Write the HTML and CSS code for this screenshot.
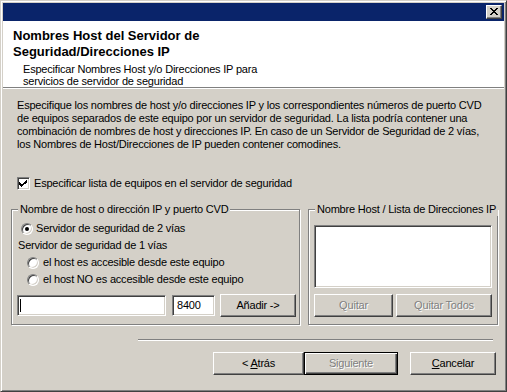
FILE: index.html
```html
<!DOCTYPE html>
<html lang="es">
<head>
<meta charset="utf-8">
<title>Nombres Host del Servidor de Seguridad</title>
<link rel="stylesheet" href="styles.css">
</head>
<body>
<div class="window">
  <div class="titlebar">
    <div class="close-btn">
      <svg width="8" height="7" viewBox="0 0 8 7" shape-rendering="crispEdges">
        <rect x="0" y="0" width="2" height="1" fill="#000"/><rect x="6" y="0" width="2" height="1" fill="#000"/>
        <rect x="1" y="1" width="2" height="1" fill="#000"/><rect x="5" y="1" width="2" height="1" fill="#000"/>
        <rect x="2" y="2" width="4" height="1" fill="#000"/>
        <rect x="3" y="3" width="2" height="1" fill="#000"/>
        <rect x="2" y="4" width="4" height="1" fill="#000"/>
        <rect x="1" y="5" width="2" height="1" fill="#000"/><rect x="5" y="5" width="2" height="1" fill="#000"/>
        <rect x="0" y="6" width="2" height="1" fill="#000"/><rect x="6" y="6" width="2" height="1" fill="#000"/>
      </svg>
    </div>
  </div>
  <div class="header">
    <div class="h-title">Nombres Host del Servidor de<br>Seguridad/Direcciones IP</div>
    <div class="h-sub">Especificar Nombres Host y/o Direcciones IP para<br>servicios de servidor de seguridad</div>
  </div>
  <div class="content">
    <p class="intro">Especifique los nombres de host y/o direcciones IP y los correspondientes números de puerto CVD<br>de equipos separados de este equipo por un servidor de seguridad. La lista podría contener una<br>combinación de nombres de host y direcciones IP. En caso de un Servidor de Seguridad de 2 vías,<br>los Nombres de Host/Direcciones de IP pueden contener comodines.</p>
    <div class="check-row">
      <span class="checkbox">
        <svg width="13" height="13" viewBox="0 0 13 13" shape-rendering="crispEdges">
          <rect x="9" y="3" width="1" height="1" fill="#000"/>
          <rect x="8" y="4" width="2" height="1" fill="#000"/>
          <rect x="2" y="5" width="1" height="1" fill="#000"/><rect x="7" y="5" width="3" height="1" fill="#000"/>
          <rect x="2" y="6" width="2" height="1" fill="#000"/><rect x="6" y="6" width="3" height="1" fill="#000"/>
          <rect x="2" y="7" width="5" height="1" fill="#000"/>
          <rect x="3" y="8" width="3" height="1" fill="#000"/>
          <rect x="4" y="9" width="1" height="1" fill="#000"/>
        </svg>
      </span>
      <span>Especificar lista de equipos en el servidor de seguridad</span>
    </div>
    <div class="groups">
      <fieldset class="group group-host">
        <legend>Nombre de host o dirección IP y puerto CVD</legend>
        <div class="g-body">
          <div class="opt opt-top"><span class="radio"><span class="dot"></span></span><span>Servidor de seguridad de 2 vías</span></div>
          <div class="opt opt-label"><span>Servidor de seguridad de 1 vías</span></div>
          <div class="opt opt-sub"><span class="radio"></span><span>el host es accesible desde este equipo</span></div>
          <div class="opt opt-sub"><span class="radio"></span><span>el host NO es accesible desde este equipo</span></div>
          <div class="input-row">
            <div class="edit edit-host"><span class="caret"></span></div>
            <div class="edit edit-port">8400</div>
            <div class="btn btn-add"><span>Añadir -&gt;</span></div>
          </div>
        </div>
      </fieldset>
      <fieldset class="group group-list">
        <legend>Nombre Host / Lista de Direcciones IP</legend>
        <div class="g-body g-body-list">
          <div class="listbox"></div>
          <div class="list-buttons">
            <div class="btn btn-quitar disabled"><span>Quitar</span></div>
            <div class="btn btn-quitar-todos disabled"><span>Quitar Todos</span></div>
          </div>
        </div>
      </fieldset>
    </div>
    <div class="sep"></div>
    <div class="footer">
      <div class="btn btn-back"><span>&lt; <u>A</u>trás</span></div>
      <div class="btn btn-next btn-default disabled"><span>Siguiente</span></div>
      <div class="btn btn-cancel"><span><u>C</u>ancelar</span></div>
    </div>
  </div>
</div>
</body>
</html>
```
FILE: styles.css
```css
* { box-sizing: border-box; }
html, body { margin: 0; padding: 0; }
body {
  width: 507px;
  height: 392px;
  overflow: hidden;
  background: #d4d0c8;
  font-family: "Liberation Sans", Arial, sans-serif;
  font-size: 11px;
  letter-spacing: -0.2px;
  color: #000;
}
.window {
  width: 507px;
  height: 392px;
  background: #d4d0c8;
  border: 1px solid;
  border-color: #d4d0c8 #404040 #404040 #d4d0c8;
  box-shadow: inset 1px 1px #fff, inset -1px -1px #808080;
  padding: 2px;
  display: flex;
  flex-direction: column;
}
.titlebar {
  height: 18px;
  flex: none;
  background: #0a246a;
  display: flex;
  justify-content: flex-end;
  align-items: flex-start;
  padding: 2px 2px 0 0;
}
.close-btn {
  width: 16px;
  height: 14px;
  background: #d4d0c8;
  border: 1px solid;
  border-color: #fff #404040 #404040 #fff;
  box-shadow: inset -1px -1px #808080;
  padding: 2px 0 0 3px;
  display: flex;
  align-items: flex-start;
}
.close-btn svg { display: block; }
.header {
  height: 67px;
  flex: none;
  background: #fff;
  border-bottom: 1px solid #808080;
  padding: 7px 0 0 10px;
}
.h-title {
  font-weight: bold;
  font-size: 13px;
  line-height: 16px;
  letter-spacing: 0;
}
.h-sub {
  margin: 3px 0 0 10px;
  line-height: 12px;
}
.content {
  flex: 1;
  border-top: 1px solid #fff;
  padding-top: 10px;
}
.intro {
  margin: 0 0 0 14px;
  line-height: 13px;
  white-space: nowrap;
}
.check-row {
  display: flex;
  align-items: center;
  gap: 4px;
  height: 13px;
  margin: 26px 0 0 14px;
  line-height: 13px;
}
.checkbox {
  width: 13px;
  height: 13px;
  background: #fff;
  border: 1px solid;
  border-color: #808080 #fff #fff #808080;
  box-shadow: inset 1px 1px #404040, inset -1px -1px #d4d0c8;
  position: relative;
}
.checkbox svg {
  position: absolute;
  left: -1px;
  top: -1px;
}
.groups {
  display: flex;
  gap: 8px;
  height: 122px;
  margin: 13px 0 0 8px;
}
.group {
  margin: 0;
  padding: 0;
  min-width: 0;
  border: 1px solid #808080;
  box-shadow: inset 1px 1px #fff, 1px 1px #fff;
}
.group legend {
  margin-left: 6px;
  padding: 0 2px;
  line-height: 13px;
  background: #d4d0c8;
  white-space: nowrap;
}
.group-host { width: 289px; }
.group-list { width: 190px; }
.g-body {
  display: flex;
  flex-direction: column;
  padding: 4px 0 0 5px;
}
.opt {
  height: 17px;
  display: flex;
  align-items: center;
  line-height: 13px;
  white-space: nowrap;
}
.opt-top { padding-left: 4px; gap: 3px; }
.opt-label { padding-left: 1px; }
.opt-sub { padding-left: 10px; gap: 4px; }
.radio {
  width: 12px;
  height: 12px;
  flex: none;
  border-radius: 50%;
  background: #fff;
  border: 1px solid;
  border-color: #808080 #fff #fff #808080;
  box-shadow: inset 1px 1px #404040, inset -1px -1px #d4d0c8;
  display: flex;
  align-items: center;
  justify-content: center;
}
.dot {
  width: 4px;
  height: 4px;
  border-radius: 50%;
  background: #000;
}
.input-row {
  display: flex;
  align-items: center;
  height: 23px;
  margin-top: 6px;
}
.edit {
  height: 21px;
  background: #fff;
  border: 1px solid;
  border-color: #808080 #fff #fff #808080;
  box-shadow: inset 1px 1px #404040, inset -1px -1px #d4d0c8;
  display: flex;
  align-items: center;
  line-height: 13px;
}
.edit-host { width: 149px; padding-left: 2px; }
.caret {
  width: 1px;
  height: 13px;
  background: #000;
}
.edit-port { width: 43px; margin-left: 6px; padding-left: 4px; }
.btn {
  height: 23px;
  background: #d4d0c8;
  border: 1px solid;
  border-color: #fff #404040 #404040 #fff;
  box-shadow: inset -1px -1px #808080;
  display: flex;
  align-items: center;
  justify-content: center;
  line-height: 13px;
  white-space: nowrap;
}
.btn u { text-decoration: underline; text-underline-offset: 1px; }
.btn-add { width: 76px; margin-left: 5px; }
.disabled {
  color: #808080;
  text-shadow: 1px 1px 0 #fff;
}
.g-body-list { padding-top: 9px; }
.listbox {
  width: 178px;
  height: 63px;
  background: #fff;
  border: 1px solid;
  border-color: #808080 #fff #fff #808080;
  box-shadow: inset 1px 1px #404040, inset -1px -1px #d4d0c8;
}
.list-buttons {
  display: flex;
  gap: 3px;
  margin-top: 6px;
}
.btn-quitar { width: 79px; }
.btn-quitar-todos { width: 96px; }
.sep {
  width: 355px;
  margin: 14px 0 0 135px;
  border-top: 1px solid #808080;
  border-bottom: 1px solid #fff;
}
.footer {
  display: flex;
  margin: 11px 0 0 210px;
}
.btn-back { width: 91px; }
.btn-next { width: 94px; }
.btn-default {
  border-color: #000;
  box-shadow: inset 1px 1px #fff, inset -1px -1px #404040, inset -2px -2px #808080;
}
.btn-cancel { width: 86px; margin-left: 12px; }
```
